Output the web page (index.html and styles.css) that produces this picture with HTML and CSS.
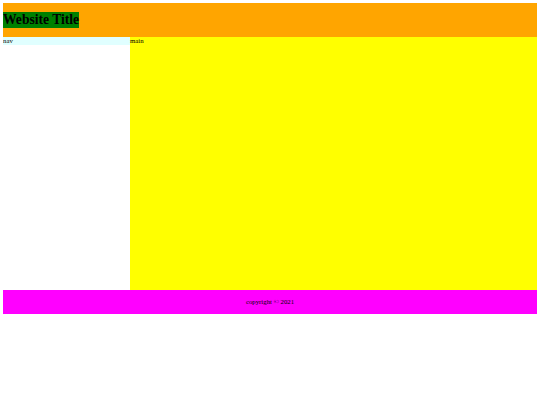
FILE: index.html
```html
<!DOCTYPE html>
<html>
<head>
<meta charset="utf-8">
<link rel="stylesheet" href="styles.css">
</head>
<body>
<header class="site-header"><h1 class="title">Website Title</h1></header>
<div class="content">
<nav class="nav">nav</nav>
<main class="main">main</main>
</div>
<footer class="footer">copyright © 2021</footer>
</body>
</html>
```
FILE: styles.css
```css
html, body { background: #fff; }
body {
  margin: 3px;
  font-family: "Liberation Serif", "Times New Roman", serif;
  font-size: 6.8px;
  line-height: 8px;
  color: #000;
}
.site-header {
  background: #ffa500;
  height: 34px;
  display: flex;
  align-items: center;
}
.title {
  margin: 0;
  font-size: 13.6px;
  line-height: 15.5px;
  font-weight: bold;
  background: #008000;
  display: inline-block;
}
.content {
  display: flex;
  height: 253px;
}
.nav {
  width: 127px;
  background: #e0ffff;
  align-self: flex-start;
}
.main {
  flex: 1;
  background: #ffff00;
}
.footer {
  background: #ff00ff;
  height: 24px;
  line-height: 24px;
  text-align: center;
}
```
